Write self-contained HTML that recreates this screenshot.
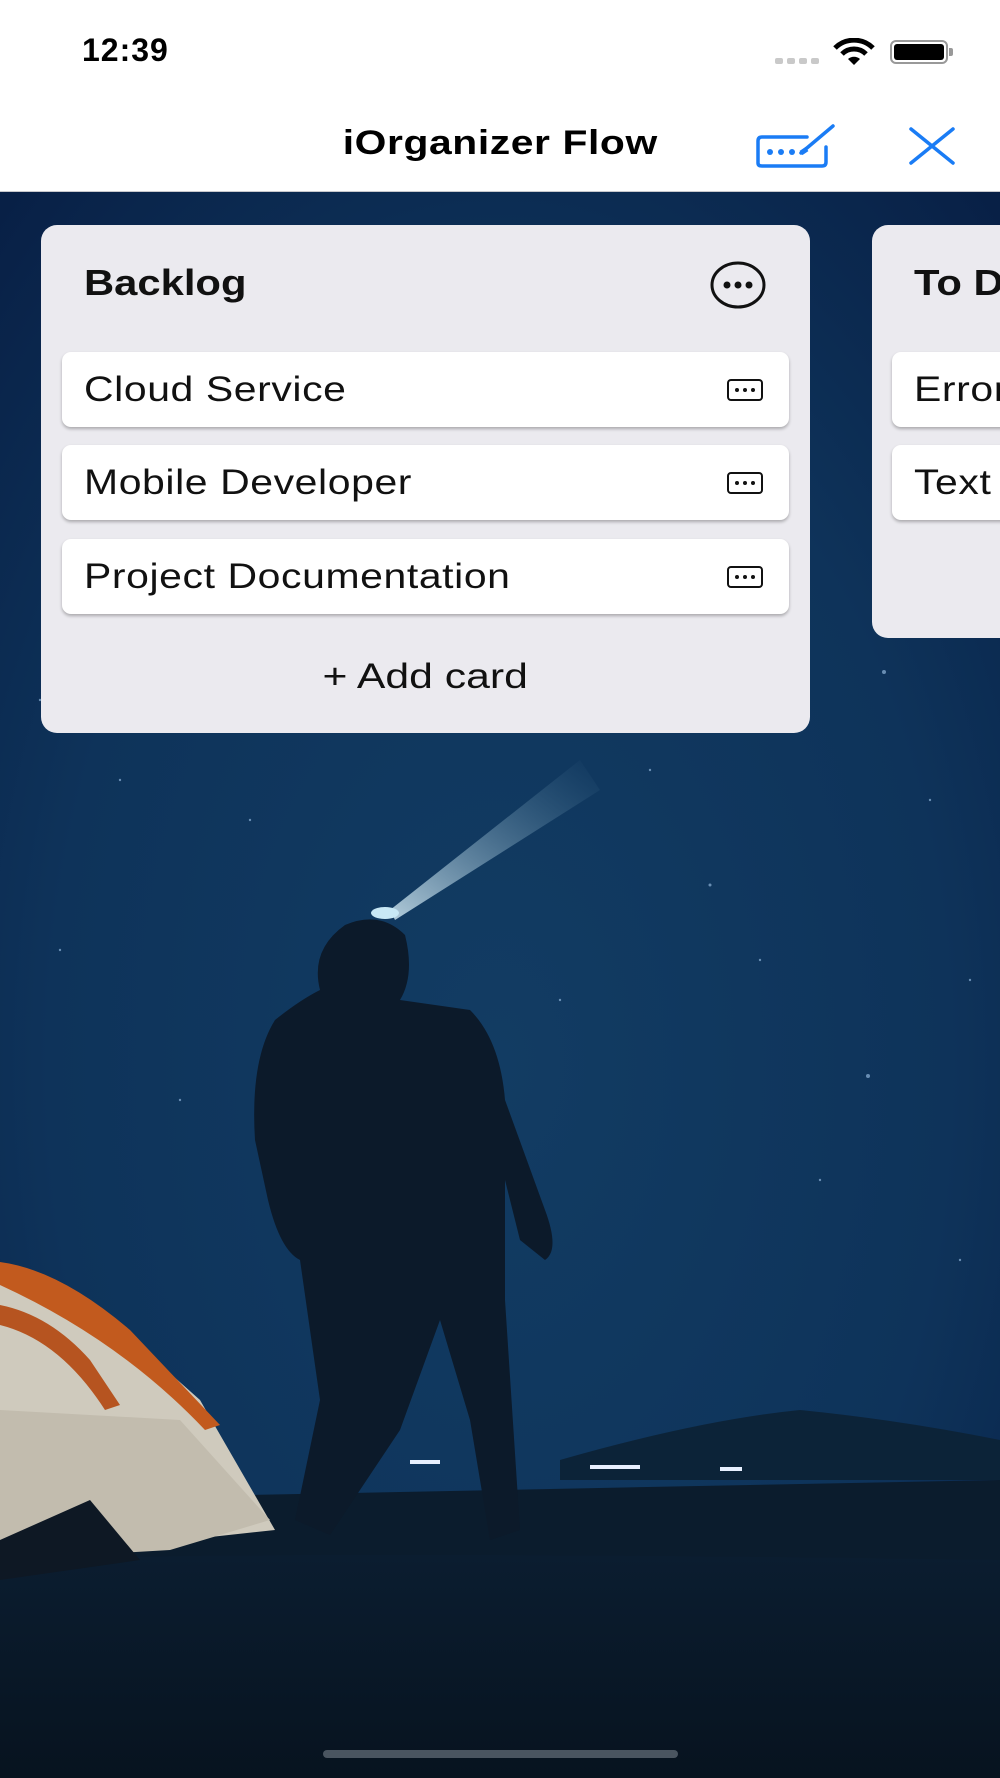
<!DOCTYPE html>
<html><head><meta charset="utf-8"><style>
*{margin:0;padding:0;box-sizing:border-box}
body{width:1000px;height:1778px;overflow:hidden;position:relative;font-family:"Liberation Sans",sans-serif;background:#0b2446}
.abs{position:absolute}
.top{left:0;top:0;width:1000px;height:192px;background:#fff;border-bottom:1px solid #c8c8cc}
.panel{background:#ebeaef;border-radius:16px}
.card{background:#fff;border-radius:9px;box-shadow:0 2px 3px rgba(0,0,0,.28);height:75px;font-size:35px;color:#111;padding-left:22px;line-height:75px;white-space:nowrap;overflow:hidden}
.card span{display:inline-block;transform:scaleX(1.17);transform-origin:left center;letter-spacing:.5px}
.kb{position:absolute;right:26px;top:27px;width:36px;height:22px;border:2.5px solid #111;border-radius:4px}
.kb i{position:absolute;top:7px;width:4px;height:4px;background:#111;border-radius:50%}
.sx{display:inline-block;transform:scaleX(1.16);transform-origin:left center}
</style></head><body>
<svg class="abs" style="left:0;top:192px" width="1000" height="1586" viewBox="0 192 1000 1586">
<defs>
<radialGradient id="sky" cx="0.5" cy="0.55" r="0.75">
<stop offset="0" stop-color="#123c63"/><stop offset="0.6" stop-color="#0e335a"/><stop offset="1" stop-color="#081f45"/></radialGradient>
<linearGradient id="gr" x1="0" y1="0" x2="0" y2="1"><stop offset="0" stop-color="#0b1d30"/><stop offset="1" stop-color="#07131f"/></linearGradient>
<linearGradient id="beam" x1="0" y1="1" x2="1" y2="0"><stop offset="0" stop-color="#cfe6f0" stop-opacity=".85"/><stop offset="1" stop-color="#5a8aa8" stop-opacity="0"/></linearGradient>
</defs>
<rect x="0" y="192" width="1000" height="1586" fill="url(#sky)"/>
<path d="M560 1460 Q700 1420 800 1410 Q900 1420 1000 1440 L1000 1480 L560 1480Z" fill="#0c2338"/>
<path d="M0 1500 L1000 1480 L1000 1778 L0 1778Z" fill="#0b1c2d"/>
<path d="M0 1560 Q300 1550 1000 1560 L1000 1778 L0 1778Z" fill="url(#gr)"/>
<polygon points="390,910 580,760 600,790 395,920" fill="url(#beam)"/>
<ellipse cx="385" cy="913" rx="14" ry="6" fill="#c8e8f5"/>
<path d="M345 925 Q380 910 405 935 Q415 975 400 1000 L470 1010 Q500 1040 505 1100 L545 1210 Q560 1250 545 1260 L520 1240 L505 1180 L505 1300 L520 1530 L490 1540 L470 1420 L440 1320 L400 1430 L330 1535 L295 1520 L320 1400 L300 1260 Q280 1250 268 1200 L255 1140 Q250 1060 275 1020 Q300 1000 320 990 Q310 950 345 925Z" fill="#0c1a2a"/>
<path d="M0 1265 Q50 1270 110 1320 L200 1400 L275 1530 L0 1560Z" fill="#cfcabd"/>
<path d="M0 1262 Q60 1270 130 1330 L220 1425 L205 1430 Q120 1340 0 1285Z" fill="#c25a1e"/>
<path d="M0 1305 Q50 1315 90 1360 L120 1405 L105 1410 Q60 1340 0 1325Z" fill="#b65420"/>
<path d="M0 1410 L180 1420 L270 1520 L170 1550 L0 1560Z" fill="#c2bcae"/>
<path d="M0 1540 L90 1500 L140 1560 L0 1580Z" fill="#0e1824"/>
<g fill="#8fb4d8" opacity=".7">
<circle cx="884" cy="672" r="2"/><circle cx="710" cy="885" r="1.5"/><circle cx="868" cy="1076" r="2"/><circle cx="120" cy="780" r="1.2"/><circle cx="250" cy="820" r="1.2"/><circle cx="650" cy="770" r="1.2"/><circle cx="930" cy="800" r="1.2"/><circle cx="560" cy="1000" r="1.2"/><circle cx="760" cy="960" r="1.2"/><circle cx="60" cy="950" r="1.2"/><circle cx="180" cy="1100" r="1.2"/><circle cx="820" cy="1180" r="1.2"/><circle cx="960" cy="1260" r="1.2"/><circle cx="40" cy="700" r="1.2"/><circle cx="970" cy="980" r="1.2"/>
</g>
<g fill="#e8f0ff"><rect x="410" y="1460" width="30" height="4"/><rect x="590" y="1465" width="50" height="4"/><rect x="720" y="1467" width="22" height="4"/></g>
</svg>
<div class="abs top"></div>
<div class="abs" style="left:82px;top:32px;font-size:32px;font-weight:bold;color:#000;letter-spacing:1px">12:39</div>
<div class="abs" style="left:775px;top:58px;width:44px;height:6px;display:flex;gap:4px"><i style="flex:1;background:#c9c9c9;border-radius:2px"></i><i style="flex:1;background:#c9c9c9;border-radius:2px"></i><i style="flex:1;background:#c9c9c9;border-radius:2px"></i><i style="flex:1;background:#c9c9c9;border-radius:2px"></i></div>
<svg class="abs" style="left:832px;top:38px" width="44" height="28" viewBox="0 0 44 28"><path d="M3 10 A27 27 0 0 1 41 10" stroke="#000" stroke-width="5" fill="none"/><path d="M10 16 A17 17 0 0 1 34 16" stroke="#000" stroke-width="5" fill="none"/><path d="M16 21 L22 27 L28 21 A9 9 0 0 0 16 21Z" fill="#000"/></svg>
<div class="abs" style="left:890px;top:40px;width:58px;height:24px;border:2px solid #999;border-radius:6px;padding:2px"><div style="background:#000;height:100%;border-radius:3px"></div></div>
<div class="abs" style="left:949px;top:48px;width:4px;height:8px;background:#999;border-radius:0 2px 2px 0"></div>
<div class="abs" style="left:0;width:1000px;top:124px;text-align:center;font-size:34px;font-weight:bold;color:#000"><span style="display:inline-block;transform:scaleX(1.2);transform-origin:center;letter-spacing:.5px">iOrganizer Flow</span></div>
<svg class="abs" style="left:755px;top:120px" width="86" height="50" viewBox="0 0 86 50"><path d="M52 17 H7 Q3 17 3 21 V43 Q3 46 7 46 H67 Q71 46 71 42 V27" stroke="#1a7cf5" stroke-width="3.5" fill="none" stroke-linecap="round"/><circle cx="15" cy="32" r="3" fill="#1a7cf5"/><circle cx="26" cy="32" r="3" fill="#1a7cf5"/><circle cx="37" cy="32" r="3" fill="#1a7cf5"/><path d="M46 33 L78 6" stroke="#1a7cf5" stroke-width="3.5" stroke-linecap="round"/><path d="M46 33 L52 29" stroke="#1a7cf5" stroke-width="5"/></svg>
<svg class="abs" style="left:908px;top:126px" width="48" height="40" viewBox="0 0 48 40"><path d="M3 3 L45 37 M45 3 L3 37" stroke="#1a7cf5" stroke-width="3.5" stroke-linecap="round"/></svg>

<div class="abs panel" style="left:41px;top:225px;width:769px;height:508px"></div>
<div class="abs" style="left:84px;top:262px;font-size:36px;font-weight:bold;color:#111"><span class="sx">Backlog</span></div>
<svg class="abs" style="left:709px;top:259px" width="58" height="52" viewBox="0 0 58 52"><ellipse cx="29" cy="26" rx="26" ry="22" stroke="#111" stroke-width="3" fill="none"/><circle cx="18" cy="26" r="3.5" fill="#111"/><circle cx="29" cy="26" r="3.5" fill="#111"/><circle cx="40" cy="26" r="3.5" fill="#111"/></svg>
<div class="abs card" style="left:62px;top:352px;width:727px"><span>Cloud Service</span><div class="kb"><i style="left:6px"></i><i style="left:14px"></i><i style="left:22px"></i></div></div>
<div class="abs card" style="left:62px;top:445px;width:727px"><span>Mobile Developer</span><div class="kb"><i style="left:6px"></i><i style="left:14px"></i><i style="left:22px"></i></div></div>
<div class="abs card" style="left:62px;top:539px;width:727px"><span>Project Documentation</span><div class="kb"><i style="left:6px"></i><i style="left:14px"></i><i style="left:22px"></i></div></div>
<div class="abs" style="left:41px;width:769px;top:657px;text-align:center;font-size:35px;color:#111"><span style="display:inline-block;transform:scaleX(1.22);transform-origin:center">+ Add card</span></div>

<div class="abs panel" style="left:872px;top:225px;width:200px;height:413px"></div>
<div class="abs" style="left:914px;top:262px;font-size:36px;font-weight:bold;color:#111;white-space:nowrap"><span class="sx">To Do</span></div>
<div class="abs card" style="left:892px;top:352px;width:200px"><span>Error</span></div>
<div class="abs card" style="left:892px;top:445px;width:200px"><span>Text</span></div>

<div class="abs" style="left:323px;top:1750px;width:355px;height:8px;background:#4a5560;border-radius:4px"></div>
</body></html>
